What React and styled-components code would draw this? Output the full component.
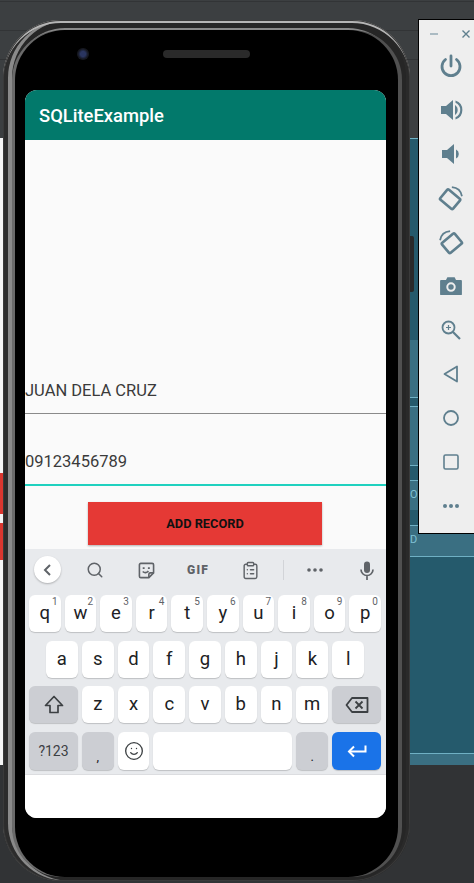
import styled, { createGlobalStyle } from 'styled-components';
import { Search, ClipboardList, Smile } from 'lucide-react';

const row1 = [['q', '1'], ['w', '2'], ['e', '3'], ['r', '4'], ['t', '5'], ['y', '6'], ['u', '7'], ['i', '8'], ['o', '9'], ['p', '0']];
const row2 = ['a', 's', 'd', 'f', 'g', 'h', 'j', 'k', 'l'];
const row3 = ['z', 'x', 'c', 'v', 'b', 'n', 'm'];

const Rotate = ({ flip }) => (
    <svg width="28" height="28" viewBox="0 0 32 32" fill="none" stroke="#5f7f8e" strokeWidth="3" style={flip ? { transform: 'scaleX(-1)' } : undefined}>
        <rect x="7.5" y="8" width="15" height="19" rx="1.5" transform="rotate(-50 15 17.5)" />
        <path d="M17 3.5c6 .5 10.5 4.5 11.500 10.500" strokeWidth="2" />
    </svg>
);

const SideIcons = [
    <svg key="power" width="24" height="24" viewBox="0 0 24 24" fill="none" stroke="#5f7f8e" strokeWidth="2.8" strokeLinecap="round">
        <path d="M12 2v10" />
        <path d="M6.500 5.500a9 9 0 1 0 11 0" />
    </svg>,
    <svg key="up" width="24" height="24" viewBox="0 0 24 24" fill="#5f7f8e">
        <path d="M2 8h5l7-6v20l-7-6H2z" />
        <path d="M16 7a6 6 0 0 1 0 10z" />
        <path d="M16.500 2.500a10 10 0 0 1 0 19v-2.200a8 8 0 0 0 0-14.600z" />
    </svg>,
    <svg key="down" width="24" height="24" viewBox="0 0 24 24" fill="#5f7f8e">
        <path d="M3 8h5l7-6v20l-7-6H3z" />
        <path d="M17 7.500a5 5 0 0 1 0 9z" />
    </svg>,
    <Rotate key="r1" />,
    <Rotate key="r2" flip />,
    <svg key="cam" width="22" height="20" viewBox="0 0 24 22">
        <path fill="#5f7f8e" fillRule="evenodd" d="M1 4.500h5.500L8 1.500h8l1.500 3H23a1 1 0 0 1 1 1V20a1 1 0 0 1-1 1H1a1 1 0 0 1-1-1V5.500a1 1 0 0 1 1-1zM12 7a5.200 5.200 0 1 0 0 10.400A5.200 5.200 0 0 0 12 7zm0 2.200a3 3 0 1 1 0 6 3 3 0 0 1 0-6z" />
    </svg>,
    <svg key="zoom" width="20" height="20" viewBox="0 0 20 20" fill="none" stroke="#5f7f8e" strokeWidth="1.800">
        <circle cx="7.500" cy="7.500" r="6" />
        <path d="M12 12l7 7" strokeWidth="2.200" />
        <path d="M7.500 5v5M5 7.500h5" strokeWidth="1.200" />
    </svg>,
    <svg key="back" width="16" height="18" viewBox="0 0 16 18" fill="none" stroke="#5f7f8e" strokeWidth="1.800" strokeLinejoin="round">
        <path d="M14 1.500v15L1.500 9z" />
    </svg>,
    <svg key="home" width="18" height="18" viewBox="0 0 18 18" fill="none" stroke="#5f7f8e" strokeWidth="1.800">
        <circle cx="9" cy="9" r="7" />
    </svg>,
    <svg key="square" width="16" height="16" viewBox="0 0 16 16" fill="none" stroke="#5f7f8e" strokeWidth="1.600">
        <rect x="1" y="1" width="14" height="14" rx="1.500" />
    </svg>,
    <svg key="more" width="18" height="6" viewBox="0 0 18 6" fill="#5f7f8e">
        <circle cx="3" cy="3" r="2" />
        <circle cx="9" cy="3" r="2" />
        <circle cx="15" cy="3" r="2" />
    </svg>,
];

const App = () => {
    return (
        <Desktop>
            <GlobalStyle />
            <TopArea>
                <TopLine />
                <TopLine />
                <TopLine />
            </TopArea>
            <MiddleArea>
                <LeftStrip>
                    <StripRed top={335} height={41} />
                    <StripRed top={385} height={37} />
                </LeftStrip>
                <TealArea>
                    <TealBand height={202} first />
                    <TealBand height={57} light />
                    <TealBand height={9} line />
                    <TealBand height={59} light line />
                    <TealBand height={15} line />
                    <TealBand height={30} light line><BandText>O</BandText></TealBand>
                    <TealBand height={15} />
                    <TealBand height={31} light line><BandText>D</BandText></TealBand>
                    <TealBand height={197} line />
                    <TealBand height={12} light line />
                </TealArea>
            </MiddleArea>
            <BottomArea />

            <Phone>
                <SideKey />
                <Bezel>
                    <Camera />
                    <Speaker />
                    <Screen>
                        <AppBar>SQLiteExample</AppBar>
                        <Content>
                            <Space />
                            <Field>JUAN DELA CRUZ</Field>
                            <Field active>09123456789</Field>
                            <AddButton>ADD RECORD</AddButton>
                        </Content>
                        <Keyboard>
                            <Toolbar>
                                <BackCircle>
                                    <svg width="14" height="14" viewBox="0 0 14 14" fill="none" stroke="#5f6368" strokeWidth="2">
                                        <path d="M9 2L4 7l5 5" />
                                    </svg>
                                </BackCircle>
                                <ToolIcon left={60}><Search size={18} color="#5f6368" strokeWidth={2} /></ToolIcon>
                                <ToolIcon left={111}>
                                    <svg width="17" height="17" viewBox="0 0 18 18" fill="none" stroke="#5f6368" strokeWidth="1.700">
                                        <path d="M3 1.500h12A1.500 1.500 0 0 1 16.500 3v8.500l-5 5H3A1.500 1.500 0 0 1 1.500 15V3A1.500 1.500 0 0 1 3 1.500z" />
                                        <path d="M11.500 16.500V13a1.500 1.500 0 0 1 1.500-1.500h3.500" />
                                        <path d="M5 10c2 2 4.500 1.500 6-.5" />
                                        <path d="M5 6.500h2M10.500 6.500h2" strokeWidth="2" />
                                    </svg>
                                </ToolIcon>
                                <ToolIcon left={163}><GifLabel>GIF</GifLabel></ToolIcon>
                                <ToolIcon left={215}><ClipboardList size={19} color="#5f6368" strokeWidth={1.8} /></ToolIcon>
                                <ToolDivider />
                                <ToolIcon left={280}>
                                    <svg width="18" height="6" viewBox="0 0 18 6" fill="#5f6368">
                                        <circle cx="3" cy="3" r="1.800" />
                                        <circle cx="9" cy="3" r="1.800" />
                                        <circle cx="15" cy="3" r="1.800" />
                                    </svg>
                                </ToolIcon>
                                <ToolIcon left={332}>
                                    <svg width="14" height="19" viewBox="0 0 14 19" fill="none" stroke="#5f6368" strokeWidth="1.700">
                                        <rect x="4" y="0.500" width="6" height="11.500" rx="3" fill="#5f6368" stroke="none" />
                                        <path d="M1 8.500a6 6 0 0 0 12 0M7 14.500V19" />
                                    </svg>
                                </ToolIcon>
                            </Toolbar>
                            <KeyRow>
                                {row1.map(([k, n]) => (
                                    <Key key={k}>{k}<Hint>{n}</Hint></Key>
                                ))}
                            </KeyRow>
                            <KeyRow inset>
                                {row2.map((k) => (
                                    <Key key={k}>{k}</Key>
                                ))}
                            </KeyRow>
                            <KeyRow>
                                <Key wide gray>
                                    <svg width="20" height="19" viewBox="0 0 20 19" fill="none" stroke="#3c4043" strokeWidth="1.700" strokeLinejoin="round">
                                        <path d="M10 1.500L1.500 10.500H6V17.500H14V10.500H18.500z" />
                                    </svg>
                                </Key>
                                {row3.map((k) => (
                                    <Key key={k}>{k}</Key>
                                ))}
                                <Key wide gray>
                                    <svg width="24" height="18" viewBox="0 0 24 18" fill="none" stroke="#3c4043" strokeWidth="1.800" strokeLinejoin="round">
                                        <path d="M7 2h15.500v14H7L1.500 9z" />
                                        <path d="M10.500 5.500l7 7M17.500 5.500l-7 7" />
                                    </svg>
                                </Key>
                            </KeyRow>
                            <KeyRow tall>
                                <Key wide gray small>?123</Key>
                                <Key gray comma>,</Key>
                                <Key><Smile size={20} color="#3c4043" strokeWidth={1.600} /></Key>
                                <Key grow />
                                <Key gray comma>.</Key>
                                <Key wide blue>
                                    <svg width="20" height="14" viewBox="0 0 20 14" fill="none" stroke="#fff" strokeWidth="2">
                                        <path d="M18.500 1.500v6H2" />
                                        <path d="M7 2.500L2 7.500l5 5" />
                                    </svg>
                                </Key>
                            </KeyRow>
                        </Keyboard>
                        <NavSpace />
                    </Screen>
                </Bezel>
            </Phone>

            <SidePanel>
                <PanelHead>
                    <svg width="10" height="10" viewBox="0 0 10 10" stroke="#8fa5b0" strokeWidth="1.400"><path d="M1 5h8" /></svg>
                    <svg width="10" height="10" viewBox="0 0 10 10" stroke="#5f7f8e" strokeWidth="1.400"><path d="M1.500 1.500l7 7M8.500 1.500l-7 7" /></svg>
                </PanelHead>
                {SideIcons.map((icon, i) => (
                    <SideButton key={i}>{icon}</SideButton>
                ))}
            </SidePanel>
        </Desktop>
    );
};

export default App;

const GlobalStyle = createGlobalStyle`
html, body {
    margin: 0;
    padding: 0;
    background: #313335;
    font-family: Roboto, "Liberation Sans", sans-serif;
}
`;

const Desktop = styled.div`
position: relative;
width: 474px;
height: 883px;
overflow: hidden;
display: flex;
flex-direction: column;
`;
const TopArea = styled.div`
height: 138px;
padding-top: 1px;
box-sizing: border-box;
background: #3c3f41;
display: flex;
flex-direction: column;
gap: 28px;
`;
const TopLine = styled.div`
height: 1px;
background: #323436;
`;
const MiddleArea = styled.div`
height: 627px;
display: flex;
`;
const LeftStrip = styled.div`
position: relative;
width: 8px;
background: #f5f5f5;
`;
const StripRed = styled.div`
position: absolute;
left: 0;
right: 0;
top: ${(p) => p.top}px;
height: ${(p) => p.height}px;
background: #d9362f;
`;
const TealArea = styled.div`
flex: 1;
display: flex;
flex-direction: column;
background: #255a6c;
`;
const TealBand = styled.div`
box-sizing: border-box;
height: ${(p) => p.height}px;
background: ${(p) => (p.light ? '#3a6f82' : '#255a6c')};
border-top: 1px solid ${(p) => (p.line || p.first ? '#6fb0c4' : 'transparent')};
padding-left: 402px;
`;
const BandText = styled.div`
font-size: 11px;
line-height: 28px;
color: #7fc0d4;
`;
const BottomArea = styled.div`
flex: 1;
background: #313335;
`;

const Phone = styled.div`
position: absolute;
left: 3px;
top: 20px;
width: 407px;
height: 861px;
box-sizing: border-box;
padding: 10px 12px 4px 12px;
border-radius: 58px;
background: #262626;
box-shadow: inset 0 0 0 1px #3a3a3a, inset 0 3px 0 0 #b5b5b5, inset 5px 0 0 #2c2c2c, inset 9px 0 0 #8a8a8a, inset -4px 0 0 #2a2a2a;
`;
const SideKey = styled.div`
position: absolute;
right: -4px;
top: 216px;
width: 4px;
height: 56px;
border-radius: 0 2px 2px 0;
background: #2a2a2a;
`;
const Bezel = styled.div`
position: relative;
height: 100%;
box-sizing: border-box;
padding: 60px 12px 59px 10px;
border-radius: 50px;
background: #000;
box-shadow: 4px 0 0 #505050, -3px 0 0 #6a6a6a, 0 -2px 0 #8a8a8a;
`;
const Camera = styled.div`
position: absolute;
left: 62px;
top: 18px;
width: 12px;
height: 12px;
border-radius: 50%;
background: radial-gradient(circle, #2a3560 0 30%, #15171f 60%, #20222a 100%);
`;
const Speaker = styled.div`
position: absolute;
left: 148px;
top: 20px;
width: 87px;
height: 8px;
border-radius: 4px;
background: #2a2a2a;
`;
const Screen = styled.div`
height: 100%;
border-radius: 12px;
overflow: hidden;
display: flex;
flex-direction: column;
background: #fff;
`;
const AppBar = styled.div`
height: 50px;
flex: none;
box-sizing: border-box;
padding-left: 14px;
display: flex;
align-items: center;
font-size: 18.4px;
font-weight: 500;
color: #fff;
background: #02796b;
box-shadow: 0 1px 1px #d0d0d0;
`;
const Content = styled.div`
flex: 1;
min-height: 0;
display: flex;
flex-direction: column;
background: #fafafa;
`;
const Space = styled.div`
flex: 1;
`;
const Field = styled.div`
height: ${(p) => (p.active ? '72px' : '46px')};
box-sizing: border-box;
display: flex;
align-items: flex-end;
padding-bottom: 12px;
font-size: 16.5px;
line-height: 20px;
color: #3a3a3a;
border-bottom: ${(p) => (p.active ? '2px solid #1fd1bf' : '1px solid #8a8a8a')};
`;
const AddButton = styled.div`
width: 234px;
height: 43px;
margin: 16px 0 4px 63px;
display: flex;
align-items: center;
justify-content: center;
font-size: 12.8px;
font-weight: 700;
color: #111;
background: #e53935;
box-shadow: 0 1px 2px rgba(0, 0, 0, 0.3);
`;
const Keyboard = styled.div`
height: 226px;
flex: none;
box-sizing: border-box;
padding: 0 5px 0 4px;
background: #e8eaed;
border-bottom: 1px solid #dcdde0;
`;
const Toolbar = styled.div`
position: relative;
height: 46px;
`;
const BackCircle = styled.div`
position: absolute;
left: 5px;
top: 7px;
width: 27px;
height: 27px;
border-radius: 50%;
background: #fff;
box-shadow: 0 1px 2px rgba(0, 0, 0, 0.25);
display: flex;
align-items: center;
justify-content: center;
`;
const ToolIcon = styled.div`
position: absolute;
left: ${(p) => p.left - 5}px;
top: 10px;
width: 22px;
height: 22px;
display: flex;
align-items: center;
justify-content: center;
`;
const GifLabel = styled.span`
font-size: 12px;
font-weight: 900;
letter-spacing: 1.2px;
color: #5f6368;
`;
const ToolDivider = styled.div`
position: absolute;
left: 254px;
top: 11px;
width: 1px;
height: 20px;
background: #d2d4d8;
`;
const KeyRow = styled.div`
display: flex;
gap: 4px;
height: ${(p) => (p.tall ? '38px' : '37px')};
margin-bottom: ${(p) => (p.tall ? '0' : '8.5px')};
padding: 0 ${(p) => (p.inset ? '17px' : '0')};
`;
const Key = styled.div`
position: relative;
flex: ${(p) => (p.grow ? '1 1 auto' : p.wide ? '0 0 49px' : '1 1 0')};
${(p) => (p.grow ? 'min-width: 139px;' : '')}
display: flex;
align-items: ${(p) => (p.comma ? 'flex-end' : 'center')};
justify-content: center;
padding-bottom: ${(p) => (p.comma ? '7px' : '0')};
box-sizing: border-box;
border-radius: 6px;
font-size: ${(p) => (p.small ? '14px' : p.comma ? '13px' : '18.5px')};
line-height: 1;
color: ${(p) => (p.small ? '#3c4043' : '#202124')};
background: ${(p) => (p.blue ? '#1a73e8' : p.gray ? '#ccced3' : '#fff')};
box-shadow: 0 1px 1px rgba(0, 0, 0, 0.18);
`;
const Hint = styled.span`
position: absolute;
top: 2px;
right: 3px;
font-size: 10px;
color: #5f6368;
`;
const NavSpace = styled.div`
height: 43px;
flex: none;
background: #fff;
`;

const SidePanel = styled.div`
position: absolute;
left: 418px;
top: 19px;
width: 56px;
height: 515px;
box-sizing: border-box;
background: #eeeeee;
border: 1px solid #000;
border-right: none;
display: flex;
flex-direction: column;
align-items: center;
padding-left: 8px;
`;
const PanelHead = styled.div`
height: 24px;
width: 100%;
box-sizing: border-box;
padding: 9px 3px 0 2px;
display: flex;
justify-content: space-between;
flex: none;
`;
const SideButton = styled.div`
height: 44px;
flex: none;
display: flex;
align-items: center;
justify-content: center;
`;
